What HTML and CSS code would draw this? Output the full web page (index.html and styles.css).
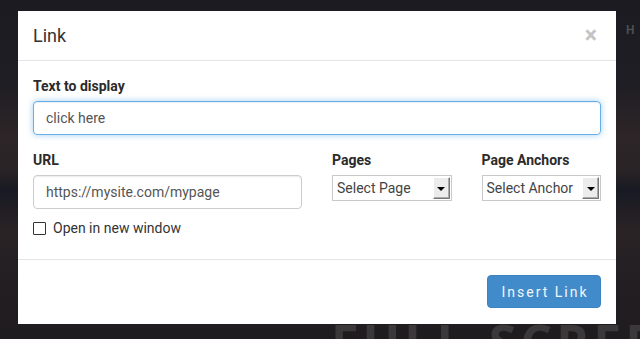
FILE: index.html
```html
<!DOCTYPE html>
<html>
<head>
<meta charset="utf-8">
<link rel="stylesheet" href="styles.css">
</head>
<body>
<div class="page">
  <div class="bg-nav">H</div>
  <div class="bg-hero">FULL-SCREEN</div>
  <div class="modal">
    <div class="modal-header">
      <h4 class="modal-title">Link</h4>
      <span class="close">&times;</span>
    </div>
    <div class="modal-body">
      <div class="form-group">
        <label class="label">Text to display</label>
        <div class="input focus">click here</div>
      </div>
      <div class="row">
        <div class="col">
          <label class="label">URL</label>
          <div class="input">https://mysite.com/mypage</div>
        </div>
        <div class="col">
          <label class="label">Pages</label>
          <div class="select"><span class="select-text">Select Page</span><span class="select-btn"><span class="tri"></span></span></div>
        </div>
        <div class="col">
          <label class="label">Page Anchors</label>
          <div class="select"><span class="select-text">Select Anchor</span><span class="select-btn"><span class="tri"></span></span></div>
        </div>
      </div>
      <div class="check-row">
        <span class="checkbox"></span>
        <span class="check-label">Open in new window</span>
      </div>
    </div>
    <div class="modal-footer">
      <button class="btn">Insert Link</button>
    </div>
  </div>
</div>
</body>
</html>
```
FILE: styles.css
```css
* { box-sizing: border-box; }
html, body { margin: 0; padding: 0; }
body {
  width: 640px;
  height: 339px;
  overflow: hidden;
  font-family: Roboto, "Liberation Sans", sans-serif;
}
.page {
  position: relative;
  width: 640px;
  height: 339px;
  overflow: hidden;
  background: linear-gradient(180deg, #1b1b21 0%, #1f1e24 25%, #2d2527 40%, #2a2426 50%, #181a23 56%, #2a2325 68%, #231f23 80%, #1f1c20 100%);
}
.bg-nav {
  position: absolute;
  left: 626px;
  top: 23px;
  font-size: 12px;
  font-weight: 700;
  color: #4a4d52;
}
.bg-hero {
  position: absolute;
  left: 331px;
  top: 317px;
  font-family: "Open Sans", "Liberation Sans", sans-serif;
  font-size: 50px;
  font-weight: 700;
  letter-spacing: 4px;
  line-height: 50px;
  color: #3b3839;
  white-space: nowrap;
}
.modal {
  position: absolute;
  left: 18px;
  top: 11px;
  width: 598px;
  height: 313px;
  background: #fff;
  display: flex;
  flex-direction: column;
}
.modal-header {
  height: 50px;
  border-bottom: 1px solid #e5e5e5;
  display: flex;
  align-items: center;
  justify-content: space-between;
  padding: 0 18px 0 15px;
}
.modal-title {
  margin: 0;
  font-size: 18px;
  font-weight: 400;
  color: #333;
  line-height: 20px;
}
.close {
  font-size: 23px;
  font-weight: 700;
  color: #c4c4c4;
  line-height: 20px;
  margin-top: 1px;
  margin-right: 1px;
}
.modal-body {
  padding: 15px 15px 0;
  height: 199px;
  border-bottom: 1px solid #e5e5e5;
}
.form-group { margin-bottom: 15px; }
.label {
  display: block;
  font-size: 14px;
  font-weight: 700;
  color: #2b2b2b;
  line-height: 20px;
  margin-bottom: 5px;
}
.input {
  height: 34px;
  border: 1px solid #ccc;
  border-radius: 4px;
  padding: 0 12px;
  font-size: 14px;
  line-height: 32px;
  color: #555;
  box-shadow: inset 0 1px 1px rgba(0,0,0,.075);
}
.input.focus {
  border-color: #66afe9;
  box-shadow: inset 0 1px 1px rgba(0,0,0,.075), 0 0 6px rgba(102,175,233,.6);
}
.row {
  display: grid;
  grid-template-columns: 269px 1fr 1fr;
  column-gap: 30px;
}
.select {
  height: 26px;
  border: 1px solid #c9c9c9;
  display: flex;
  align-items: center;
  justify-content: space-between;
  padding: 1px 1px 1px 4px;
}
.select-text {
  font-size: 14px;
  color: #444;
}
.select-btn {
  width: 17px;
  height: 22px;
  background: #ececec;
  border-top: 1px solid #fff;
  border-left: 1px solid #fff;
  border-right: 1px solid #777;
  border-bottom: 1px solid #777;
  box-shadow: inset -1px -1px 0 #aaa;
  display: flex;
  align-items: center;
  justify-content: center;
}
.tri {
  width: 0;
  height: 0;
  border-left: 4px solid transparent;
  border-right: 4px solid transparent;
  border-top: 4px solid #000;
  margin-top: 1px;
}
.check-row {
  margin-top: 9px;
  display: flex;
  align-items: center;
  height: 20px;
}
.checkbox {
  width: 13px;
  height: 13px;
  border: 1px solid #333;
  border-radius: 1px;
  background: #fff;
}
.check-label {
  margin-left: 7px;
  font-size: 14px;
  color: #333;
}
.modal-footer {
  flex: 1;
  display: flex;
  justify-content: flex-end;
  align-items: flex-start;
  padding: 15px 15px 0;
}
.btn {
  width: 114px;
  height: 33px;
  background: #428bca;
  border: 1px solid #3d82c2;
  border-radius: 4px;
  color: #f2f6fb;
  font-family: Roboto, "Liberation Sans", sans-serif;
  font-size: 14px;
  letter-spacing: 2px;
  padding: 0 0 0 2px;
}
```
